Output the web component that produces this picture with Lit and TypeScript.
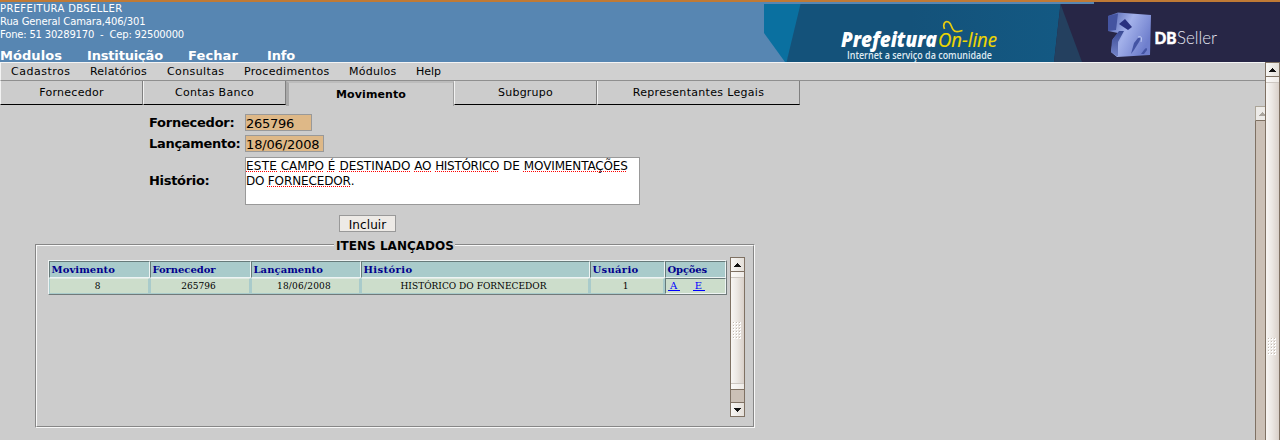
import { LitElement, html, svg, css, nothing } from "lit";
import { customElement, property } from "lit/decorators.js";

/** One line of text, tracked so that its advance equals `w` pixels. */
@customElement("fit-text")
class FitText extends LitElement {
  @property({ type: Number }) w = 0;
  static styles = css`
    :host { display: inline-block; white-space: pre; }
    .run { display: inline-block; }
  `;
  render() {
    return html`<span class="run"><slot></slot></span>`;
  }
  firstUpdated() {
    const run = this.renderRoot.querySelector(".run") as HTMLElement;
    const n = (this.textContent || "").trim().length;
    const natural = run.getBoundingClientRect().width;
    if (n && this.w) run.style.letterSpacing = `${(this.w - natural) / n}px`;
  }
}

@customElement("scroll-bar")
class ScrollBar extends LitElement {
  @property({ type: Number }) thumb = 100;
  @property({ type: Boolean }) disabled = false;
  @property({ type: Boolean }) open = false;
  static styles = css`
    :host { display: flex; flex-direction: column; width: 15px; flex: none; box-sizing: border-box; overflow: hidden; background: #cbc0b6; }
    .btn, .thumb, .trough { width: 15px; box-sizing: border-box; border: 1px solid #7f7163; flex: none; }
    .btn { height: 15px; background: linear-gradient(90deg, #f8f7f5, #e4dfd9); }
    .btn svg { display: block; }
    .thumb { border-top: 0; display: flex; flex-direction: column; justify-content: space-between; align-items: center; background: linear-gradient(90deg, #f8f6f4, #ece8e4 45%, #d9d0c9); }
    .cap { width: 13px; height: 6px; box-sizing: border-box; background: linear-gradient(90deg, #fbfaf9, #eeeae6); border-bottom: 1px solid #cdc7c1; }
    .cap.end { border-bottom: 0; border-top: 1px solid #cdc7c1; }
    .trough { flex: 1 1 0; border-top: 0; border-bottom: 0; background: #cbc0b6; }
    .off .btn { border-color: #aca598; background: #edebe8; border-bottom-color: #7f7163; }
    .off, .on { display: flex; flex-direction: column; flex: 1; }
  `;
  render() {
    const arrow = (d: boolean) => html`<svg width="13" height="13" shape-rendering="crispEdges">
      ${[0, 1, 2, 3].map((i) => {
        const half = d ? 3 - i : i;
        return svg`<rect x=${6 - half} y=${5 + i} width=${half * 2 + 1} height="1" fill=${this.disabled ? "#aaa59e" : "#111"} />`;
      })}</svg>`;
    const dots = [];
    for (let r = 0; r < 6; r++)
      for (let c = 0; c < 3; c++)
        dots.push(svg`<rect x=${c * 3} y=${r * 3} width="2" height="2" fill="#fff"/><rect x=${c * 3} y=${r * 3} width="1" height="1" fill="#c3bbb3"/>`);
    return html`<div class=${this.disabled ? "off" : "on"}>
      <div class="btn">${arrow(false)}</div>
      ${this.disabled ? nothing : html`<div class="thumb" style="height:${this.thumb}px">
        <div class="cap"></div>
        <svg width="9" height="18" shape-rendering="crispEdges">${dots}</svg>
        <div class="cap end"></div>
      </div>`}
      <div class="trough"></div>
      ${this.open ? nothing : html`<div class="btn">${arrow(true)}</div>`}
    </div>`;
  }
}

@customElement("brand-banner")
class BrandBanner extends LitElement {
  static styles = css`
    :host { display: block; width: 516px; height: 60px; }
    .art { display: block; }
    .sans { font-family: "Open Sans", "Noto Sans", sans-serif; }
    .lato { font-family: Lato, sans-serif; }
  `;
  render() {
    return html`<svg class="art" width="516" height="60" viewBox="764 2 516 60">
      <defs>
        <linearGradient id="sea" x1="0" x2="1"><stop offset=".45" stop-color="#14527a"/><stop offset="1" stop-color="#135983"/></linearGradient>
        <linearGradient id="cube" x1="0" x2="1" y1="0" y2=".5"><stop offset="0" stop-color="#4a5dab"/><stop offset=".5" stop-color="#a3b1ea"/><stop offset="1" stop-color="#6f7fcd"/></linearGradient>
        <linearGradient id="leg" x1="0" x2="0" y1="0" y2="1"><stop offset="0" stop-color="#3a4a94"/><stop offset="1" stop-color="#7383c8"/></linearGradient>
      </defs>
      <rect x="1094" y="2" width="186" height="3" fill="#272646"/>
      <path d="M764 4H802L787 62H785L764 33Z" fill="#0a70a0"/>
      <path d="M800.500 4H1062V62H786.500Z" fill="url(#sea)"/>
      <path d="M1060.500 4H1280V62H1054Z" fill="#272646"/>
      <path d="M1060.500 4L1082 62H1054Z" fill="#24405f"/>
      <g class="sans">
        <text x="841" y="47" font-size="20.500" font-weight="800" font-style="italic" fill="#fff" textLength="96" lengthAdjust="spacingAndGlyphs">Prefeitura</text>
        <text x="938" y="47" font-size="20.500" font-style="italic" fill="#f0d800" stroke="#f0d800" stroke-width=".2" textLength="59" lengthAdjust="spacingAndGlyphs">On-line</text>
        <text x="847" y="58.700" font-size="10.500" font-weight="600" fill="#dfeaf2" textLength="145" lengthAdjust="spacingAndGlyphs">Internet a serviço da comunidade</text>
      </g>
      <path d="M944.500 29C942.500 24 945 20.500 948.500 22C952.500 24 951 31 956 31.500C959 31.800 960 31 962.500 30.500" fill="none" stroke="#e8cc10" stroke-width="1.700"/>
      <path d="M1108 16L1118 12.500L1151 15L1150 55L1117 57L1111 52L1113 39L1118 33L1108 31Z" fill="url(#cube)"/>
      <path d="M1108 16L1118 13.500L1116 30L1108 31Z" fill="#4454a0"/>
      <path d="M1111 52L1112 40L1119 31L1124 31L1118 42L1118 56L1116 56Z" fill="url(#leg)"/>
      <path d="M1119 24L1125 19L1132 27L1128 30Z" fill="#29317f"/>
      <path d="M1131 54L1134 43L1138 38Q1142 37 1139 42L1134 50Z" fill="#4454a4"/>
      <path d="M1141 54L1144 50Q1147 46 1147 50L1144 54Z" fill="#4454a4"/>
      <path d="M1138 37Q1143 35 1141 42" fill="none" stroke="#b9c6f0"/>
      <g class="lato">
        <text x="1154.500" y="43.500" font-size="17" font-weight="900" fill="#fff" stroke="#fff" stroke-width=".5" textLength="22" lengthAdjust="spacingAndGlyphs">DB</text>
        <text x="1177" y="43.500" font-size="17" font-weight="300" fill="#e6e6f2" textLength="40" lengthAdjust="spacingAndGlyphs">Seller</text>
      </g>
    </svg>`;
  }
}

@customElement("app-root")
class AppRoot extends LitElement {
  static styles = css`
    :host { display: flex; flex-direction: column; width: 1280px; height: 440px; overflow: hidden; background: #ccc; color: #000; font-family: "DejaVu Sans", sans-serif; }
    .header { display: flex; height: 60px; background: #5786b2; border-top: 2px solid #c07a35; justify-content: space-between; flex: none; color: #fff; }
    .org { font-size: 10px; line-height: 13px; }
    .org .line { height: 13px; }
    .mods { display: flex; font-size: 13px; line-height: 16px; font-weight: bold; margin-top: 7px; height: 14px; }
    .m1 { width: 87px; } .m2 { width: 101px; } .m3 { width: 79px; }
    .below { display: flex; flex: 1; min-height: 0; }
    .frame { width: 1265px; display: flex; flex-direction: column; }
    .menu { display: flex; height: 17px; flex: none; border-top: 1px solid #f4f4f4; border-left: 1px solid #f4f4f4; border-bottom: 1px solid #8f8f8f; background: #d0d0d0; font-size: 11px; line-height: 18px; padding-left: 10px; }
    .i1 { width: 79px; } .i2 { width: 77px; } .i3 { width: 77px; } .i4 { width: 105px; } .i5 { width: 67px; }
    .tabs { display: flex; height: 25px; flex: none; font-size: 11px; line-height: 24px; text-align: center; }
    .tab { box-sizing: border-box; width: 143px; height: 24px; border-left: 1px solid #f2f2f2; border-right: 1px solid #808080; border-bottom: 1px solid #000; }
    .tab.wide { width: 203px; }
    .tab.active { width: 168px; height: 25px; font-weight: bold; border-left: 3px solid #a9a9a9; border-top: 2px solid #bcbcbc; border-bottom: 0; border-right-color: #a0a0a0; }
    .page { display: flex; flex: 1; min-height: 0; }
    .content { width: 1255px; padding-top: 8px; box-sizing: border-box; }
    .inner-scroll { width: 10px; }
    .form { display: grid; grid-template-columns: 96px auto; grid-template-rows: 17px 17px 49px; row-gap: 4px; margin-left: 149px; font-size: 12px; }
    .form .tall { margin-top: 1px; }
    .label { font-size: 13px; line-height: 17px; font-weight: bold; }
    .label.tall { line-height: 48px; }
    .field { box-sizing: border-box; height: 17px; border: 1px solid #999; background: #deb887; font-size: 13px; line-height: 17px; width: 67px; }
    .field.date { width: 79px; }
    .area { box-sizing: border-box; width: 395px; height: 48px; border: 1px solid #999; background: #fff; font-size: 12px; line-height: 17px; }
    .area .row { height: 15px; white-space: nowrap; }
    .bad { text-decoration: underline dotted #f00 1px; text-underline-offset: 1px; text-decoration-skip-ink: none; }
    .button { box-sizing: border-box; width: 57px; height: 17px; margin: 10px 0 0 339px; border: 1px solid #999; background: #edeae6; font-size: 12px; line-height: 18px; text-align: center; }
    .group { box-sizing: border-box; width: 720px; height: 184px; margin: 12px 0 0 35px; border: 1px solid; border-color: #868686 #f8f8f8 #f8f8f8 #868686; }
    .group-in { box-sizing: border-box; height: 182px; border: 1px solid; border-color: #f8f8f8 #868686 #868686 #f8f8f8; }
    .legend { width: 119px; height: 16px; margin: -8px 0 0 297px; padding-left: 2px; background: #ccc; font-size: 12px; line-height: 17px; font-weight: bold; }
    .list { display: flex; margin-left: 11px; padding-top: 3px; }
    .table { box-sizing: border-box; width: 679px; height: 35px; margin-top: 3px; border: 1px solid; border-color: #eef2f2 #707a7a #707a7a #eef2f2; font-family: "DejaVu Serif Condensed", "DejaVu Serif", serif; font-size: 10px; }
    .tr { display: grid; grid-template-columns: 101px 101px 110px 229px 75px 61px; }
    .th { box-sizing: border-box; height: 17px; border: 1px solid; border-color: #667a7a #eef4f4 #eef4f4 #667a7a; background: #a9cbcb; color: #00008b; font-family: "DejaVu Serif", serif; font-weight: bold; line-height: 15px; padding-left: 1.5px; }
    .td { box-sizing: border-box; height: 16px; border: 1px solid #a9cbcb; border-top-color: #dfeae2; border-right-width: 2px; background: #ccddcb; line-height: 14px; text-align: center; padding-right: 3px; }
    .td.links { border: 1px solid; border-color: #667a7a #eef4f4 #eef4f4 #667a7a; display: flex; gap: 13px; padding: 0 0 0 1.5px; color: #00f; font-family: "DejaVu Serif", serif; }
    .link { width: 12px; height: 11px; line-height: 14px; border-bottom: 1px solid #00f; }
    .list-scroll { height: 160px; margin-left: 3px; }
  `;
  private word(t: string, w: number, bad = true) {
    return html`<fit-text w=${w}><span class=${bad ? "bad" : ""}>${t}</span></fit-text>`;
  }
  render() {
    const f = (t: string, w: number) => html`<fit-text w=${w}>${t}</fit-text>`;
    const sp = html`${f("\u00a0", 4)}`;
    return html`
      <div class="header">
        <div class="org">
          <div class="line">${f("PREFEITURA DBSELLER", 122.5)}</div>
          <div class="line">${f("Rua General Camara,406/301", 145.5)}</div>
          <div class="line">${f("Fone: 51 30289170\u00a0 -\u00a0 Cep: 92500000", 184)}</div>
          <div class="mods">
            <div class="m1">${f("Módulos", 62)}</div><div class="m2">${f("Instituição", 76)}</div>
            <div class="m3">${f("Fechar", 50)}</div><div>${f("Info", 28)}</div>
          </div>
        </div>
        <brand-banner></brand-banner>
      </div>
      <div class="below">
        <div class="frame">
          <div class="menu">
            <div class="i1">${f("Cadastros", 59.5)}</div><div class="i2">${f("Relatórios", 57)}</div>
            <div class="i3">${f("Consultas", 57.5)}</div><div class="i4">${f("Procedimentos", 85.5)}</div>
            <div class="i5">${f("Módulos", 47.5)}</div><div>${f("Help", 25)}</div>
          </div>
          <div class="tabs">
            <div class="tab">${f("Fornecedor", 64.5)}</div>
            <div class="tab">${f("Contas Banco", 79)}</div>
            <div class="tab active">${f("Movimento", 70)}</div>
            <div class="tab">${f("Subgrupo", 55)}</div>
            <div class="tab wide">${f("Representantes Legais", 131.5)}</div>
          </div>
          <div class="page">
            <div class="content">
              <div class="form">
                <div class="label">${f("Fornecedor:", 85.5)}</div>
                <div class="field">${f("265796", 48)}</div>
                <div class="label">${f("Lançamento:", 91.5)}</div>
                <div class="field date">${f("18/06/2008", 73.5)}</div>
                <div class="label tall">${f("Histório:", 60.5)}</div>
                <div class="area tall">
                  <div class="row">${this.word("ESTE", 31)}${sp}${this.word("CAMPO", 43)}${sp}${this.word("É", 8)}${sp}${this.word("DESTINADO", 71)}${sp}${this.word("AO", 17)}${sp}${this.word("HISTÓRICO", 64)}${sp}${this.word("DE", 17, false)}${sp}${this.word("MOVIMENTAÇÕES", 104)}</div>
                  <div class="row">${this.word("DO", 18, false)}${sp}${this.word("FORNECEDOR", 83)}${f(".", 4)}</div>
                </div>
              </div>
              <div class="button">${f("Incluir", 37.5)}</div>
              <div class="group"><div class="group-in">
                <div class="legend">${f("ITENS LANÇADOS", 118)}</div>
                <div class="list">
                  <div class="table">
                    <div class="tr">
                      <div class="th">${f("Movimento", 63.5)}</div><div class="th">${f("Fornecedor", 63)}</div>
                      <div class="th">${f("Lançamento", 69.5)}</div><div class="th">${f("Histório", 49)}</div>
                      <div class="th">${f("Usuário", 46)}</div><div class="th">${f("Opções", 39.5)}</div>
                    </div>
                    <div class="tr">
                      <div class="td">8</div><div class="td">${f("265796", 34.5)}</div>
                      <div class="td">${f("18/06/2008", 54)}</div><div class="td">${f("HISTÓRICO DO FORNECEDOR", 146)}</div>
                      <div class="td">1</div>
                      <div class="td links"><div class="link">A</div><div class="link">E</div></div>
                    </div>
                  </div>
                  <scroll-bar class="list-scroll" thumb="118"></scroll-bar>
                </div>
              </div></div>
            </div>
            <scroll-bar class="inner-scroll" disabled open></scroll-bar>
          </div>
        </div>
        <scroll-bar thumb="541" open></scroll-bar>
      </div>`;
  }
}
